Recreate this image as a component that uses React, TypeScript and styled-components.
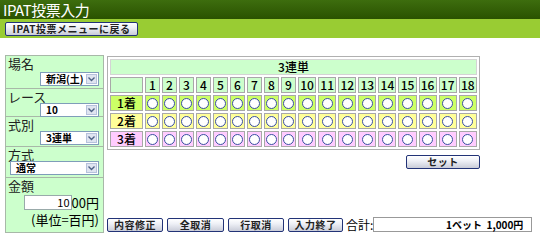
import React from 'react';
import styled, { createGlobalStyle } from 'styled-components';

const GlobalStyle = createGlobalStyle`
  html, body {
    margin: 0;
    padding: 0;
    background: #ffffff;
    font-family: "Noto Sans CJK JP", "Liberation Sans", sans-serif;
    font-size: 12px;
    color: #000;
  }
`;

const Page = styled.div`
  width: 540px;
  height: 235px;
  overflow: hidden;
`;

const TitleBar = styled.div`
  height: 19px;
  background: linear-gradient(#3d6d0e, #2a5200);
  color: #ffffff;
  font-size: 15px;
  line-height: 19px;
  padding-left: 3px;
  letter-spacing: -0.5px;
`;

const MenuBar = styled.div`
  height: 19px;
  background: #99cc33;
  display: flex;
  align-items: center;
  padding-left: 5px;
  box-sizing: border-box;
`;

const PlainButton = styled.button<{ $w: number }>`
  width: ${(p) => p.$w}px;
  height: 14px;
  padding: 0;
  margin: 0;
  border: 1px solid #223377;
  border-radius: 2px;
  background: linear-gradient(#ffffff 0%, #eef0f6 40%, #c9ccd8 100%);
  font-family: "Noto Sans CJK JP", sans-serif;
  font-size: 10px;
  font-weight: bold;
  line-height: 12px;
  color: #222;
  letter-spacing: 0.5px;
`;

const Main = styled.div`
  display: flex;
  padding: 17px 0 0 5px;
  gap: 3px;
`;

const SidePanel = styled.div`
  width: 99px;
  height: 178px;
  background: #ccffcc;
  border: 1px solid #a8b8a8;
  box-sizing: border-box;
  display: flex;
  flex-direction: column;
`;

const Field = styled.div<{ $h: number }>`
  height: ${(p) => p.$h}px;
  border-bottom: 1px solid #a8b8a8;
  box-sizing: border-box;
  padding: 0 4px 2px 2px;
  display: flex;
  flex-direction: column;
  &:last-child {
    border-bottom: none;
  }
`;

const FieldLabel = styled.div`
  font-size: 13px;
  line-height: 13px;
  padding-top: 1px;
  color: #222;
`;

const SelectBox = styled.div<{ $w: number }>`
  align-self: flex-end;
  width: ${(p) => p.$w}px;
  height: 14px;
  margin-top: auto;
  background: #ffffff;
  border: 1px solid #7f9db9;
  box-sizing: border-box;
  display: flex;
  align-items: center;
  font-size: 10px;
  font-weight: bold;
  line-height: 12px;
  padding-left: 5px;
`;

const SelectText = styled.span`
  flex: 1;
`;

const Arrow = styled.span`
  width: 11px;
  height: 10px;
  margin-right: 1px;
  background: #dfe4f0;
  border: 1px solid #b6c2dc;
  box-sizing: border-box;
  display: flex;
  align-items: center;
  justify-content: center;
`;

const AmountRow = styled.div`
  display: flex;
  align-items: center;
  justify-content: flex-end;
  height: 15px;
  margin-top: 3px;
  font-size: 13px;
  line-height: 15px;
`;

const AmountInput = styled.div`
  width: 48px;
  height: 15px;
  background: #ffffff;
  border: 1px solid #9aa;
  box-sizing: border-box;
  text-align: right;
  font-size: 11px;
  line-height: 13px;
  padding-right: 1px;
`;

const UnitNote = styled.div`
  text-align: right;
  font-size: 13px;
  line-height: 15px;
  margin-top: 2px;
`;

const RightArea = styled.div`
  display: flex;
  flex-direction: column;
  padding-top: 1px;
`;

const BetTable = styled.table`
  width: 373px;
  border: 1px solid #b0b0b0;
  border-collapse: separate;
  border-spacing: 2px;
  background: #ffffff;
  font-size: 12px;
  font-weight: 500;
  line-height: 14px;
`;

const cellBase = `
  height: 14px;
  padding: 0;
  line-height: 14px;
  text-align: center;
  border: 1px solid #a8a8a8;
`;

const TitleCell = styled.td`
  ${cellBase}
  background: #ccffcc;
  border-color: #d4d4d4;
`;

const HeadCell = styled.td<{ $first?: boolean }>`
  ${cellBase}
  background: #ccffcc;
  width: ${(p) => (p.$first ? '31px' : 'auto')};
`;

const rowColors = ['#ccff66', '#ffff99', '#ffccff'];

const PlaceCell = styled.td<{ $row: number }>`
  ${cellBase}
  background: ${(p) => rowColors[p.$row]};
`;

const RadioCell = styled.td<{ $row: number }>`
  ${cellBase}
  background: ${(p) => rowColors[p.$row]};
`;

const Radio = styled.span`
  display: block;
  width: 9px;
  height: 9px;
  margin: 0 auto;
  border: 1px solid #3a4fa0;
  border-radius: 50%;
  background: #ffffff;
`;

const SetRow = styled.div`
  display: flex;
  justify-content: flex-end;
  width: 373px;
  margin-top: 5px;
`;

const BottomRow = styled.div`
  display: flex;
  align-items: center;
  gap: 4px;
  margin-top: 48px;
`;

const TotalLabel = styled.span`
  font-size: 12px;
  line-height: 14px;
  margin-left: -1px;
`;

const TotalBox = styled.div`
  width: 159px;
  height: 15px;
  margin-left: -4px;
  border: 1px solid #999;
  box-sizing: border-box;
  text-align: right;
  font-size: 10px;
  font-weight: bold;
  line-height: 13px;
  padding-right: 8px;
`;

const ArrowIcon = () => (
  <svg width="7" height="5" viewBox="0 0 7 5">
    <path d="M0.5 0.5 L3.5 3.5 L6.5 0.5" stroke="#4d6185" strokeWidth="1.4" fill="none" />
  </svg>
);

const Select: React.FC<{ value: string; width: number }> = ({ value, width }) => (
  <SelectBox $w={width}>
    <SelectText>{value}</SelectText>
    <Arrow>
      <ArrowIcon />
    </Arrow>
  </SelectBox>
);

const numbers = Array.from({ length: 18 }, (_, i) => i + 1);
const places = ['1着', '2着', '3着'];

export default function App() {
  return (
    <Page>
      <GlobalStyle />
      <TitleBar>IPAT投票入力</TitleBar>
      <MenuBar>
        <PlainButton $w={133}>IPAT投票メニューに戻る</PlainButton>
      </MenuBar>
      <Main>
        <SidePanel>
          <Field $h={34}>
            <FieldLabel>場名</FieldLabel>
            <Select value="新潟(土)" width={59} />
          </Field>
          <Field $h={28}>
            <FieldLabel>レース</FieldLabel>
            <Select value="10" width={59} />
          </Field>
          <Field $h={30}>
            <FieldLabel>式別</FieldLabel>
            <Select value="3連単" width={59} />
          </Field>
          <Field $h={31}>
            <FieldLabel>方式</FieldLabel>
            <Select value="通常" width={89} />
          </Field>
          <Field $h={55}>
            <FieldLabel>金額</FieldLabel>
            <AmountRow>
              <AmountInput>10</AmountInput>
              <span>00円</span>
            </AmountRow>
            <UnitNote>(単位=百円)</UnitNote>
          </Field>
        </SidePanel>
        <RightArea>
          <BetTable>
            <tbody>
              <tr>
                <TitleCell colSpan={19}>3連単</TitleCell>
              </tr>
              <tr>
                <HeadCell $first />
                {numbers.map((n) => (
                  <HeadCell key={n}>{n}</HeadCell>
                ))}
              </tr>
              {places.map((p, r) => (
                <tr key={p}>
                  <PlaceCell $row={r}>{p}</PlaceCell>
                  {numbers.map((n) => (
                    <RadioCell key={n} $row={r}>
                      <Radio />
                    </RadioCell>
                  ))}
                </tr>
              ))}
            </tbody>
          </BetTable>
          <SetRow>
            <PlainButton $w={74}>セット</PlainButton>
          </SetRow>
          <BottomRow>
            <PlainButton $w={56}>内容修正</PlainButton>
            <PlainButton $w={57}>全取消</PlainButton>
            <PlainButton $w={56}>行取消</PlainButton>
            <PlainButton $w={55}>入力終了</PlainButton>
            <TotalLabel>合計:</TotalLabel>
            <TotalBox>1ベット&nbsp;&nbsp;1,000円</TotalBox>
          </BottomRow>
        </RightArea>
      </Main>
    </Page>
  );
}
